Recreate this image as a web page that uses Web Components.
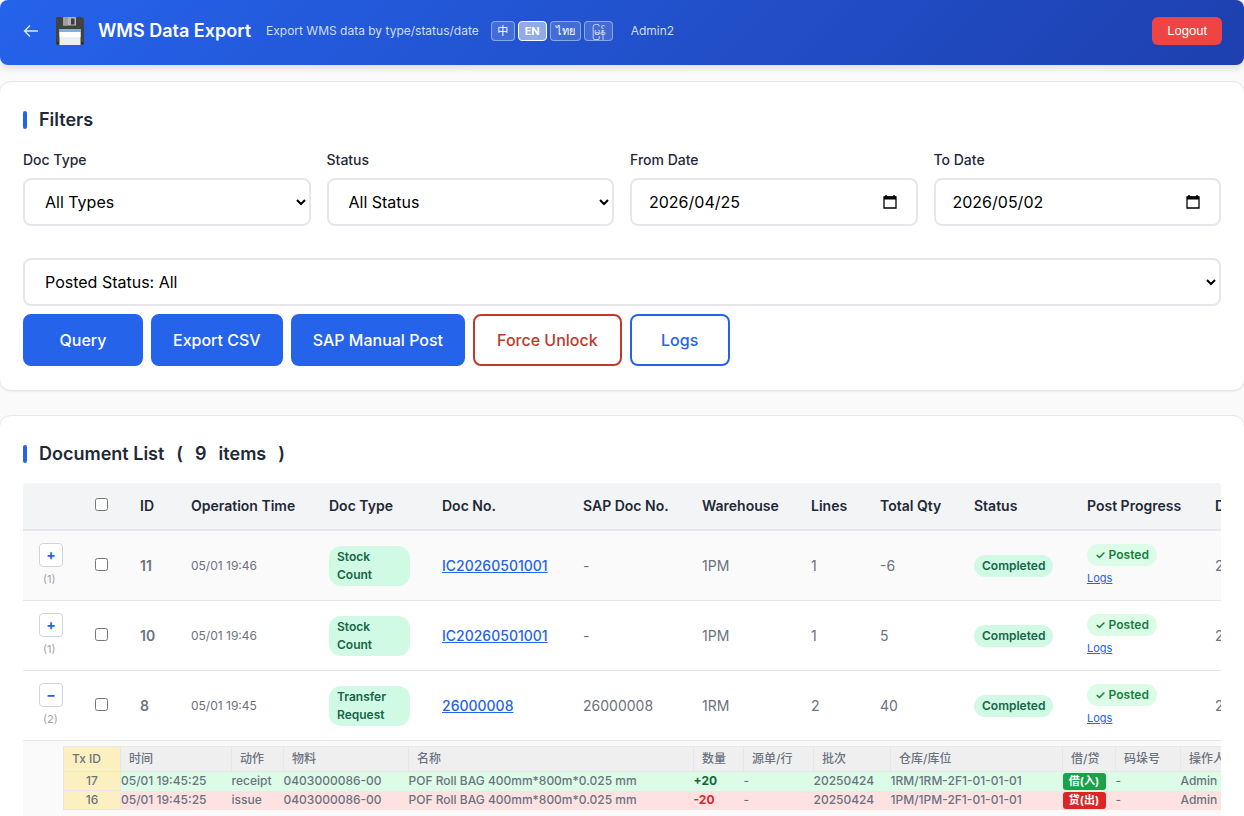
<!DOCTYPE html>
<html lang="en">
<head>
<meta charset="utf-8">
<meta name="viewport" content="width=device-width, initial-scale=1">
<title>WMS Data Export</title>
<style>
  body {
    margin: 0;
    background: #fafafa;
    color: #1f2937;
    font-family: Inter, "Noto Sans CJK SC", "Noto Sans", sans-serif;
    font-size: 14px;
    line-height: 21px;
    overflow-x: hidden;
  }
  .filters { display: grid; grid-template-columns: repeat(4, 1fr); gap: 32px 16px; }
  .wide { grid-column: 1 / -1; }
  .actions { display: flex; flex-wrap: wrap; gap: 8px; margin-top: 8px; }
  main { display: flex; flex-direction: column; gap: 24px; margin: 16px -1px 0; }
</style>
</head>
<body>
<app-header></app-header>
<main>
  <ui-card>
    <span slot="title">Filters</span>
    <div class="filters">
      <select-field label="Doc Type" value="All Types"></select-field>
      <select-field label="Status" value="All Status"></select-field>
      <date-field label="From Date" value="2026/04/25"></date-field>
      <date-field label="To Date" value="2026/05/02"></date-field>
      <select-field class="wide" name="Posted status" value="Posted Status: All"></select-field>
    </div>
    <div class="actions">
      <ui-button style="--min: 120px">Query</ui-button>
      <ui-button>Export CSV</ui-button>
      <ui-button>SAP Manual Post</ui-button>
      <ui-button kind="danger">Force Unlock</ui-button>
      <ui-button kind="outline">Logs</ui-button>
    </div>
  </ui-card>
  <ui-card>
    <span slot="title">Document List</span>
    <span slot="title">(</span>
    <span slot="title">9</span>
    <span slot="title">items</span>
    <span slot="title">)</span>
    <doc-table></doc-table>
  </ui-card>
</main>

<script>
class Base extends HTMLElement {
  connectedCallback() {
    if (this.shadowRoot) return;
    this.attachShadow({ mode: 'open' }).innerHTML = '<style>*{box-sizing:border-box}</style>' + this.render();
  }
}

customElements.define('lang-switch', class extends Base {
  render() {
    return `<style>
      :host { display: flex; gap: 3px; }
      button {
        height: 20px; padding: 0 5px; border: 1px solid #ffffff66; border-radius: 4px;
        background: #ffffff26; color: #fff; font: 400 11px/16px Inter, "Noto Sans CJK SC", "Noto Sans", sans-serif;
        min-width: 24px; overflow: hidden;
      }
      button + button { min-width: 29px; }
      button[aria-pressed=true] { background: #ffffff80; border-color: #fff; font-weight: 700; }
    </style>
    <button aria-pressed="false">中</button><button aria-pressed="true">EN</button><button aria-pressed="false">ไทย</button><button aria-pressed="false">မြန်</button>`;
  }
});

customElements.define('app-header', class extends Base {
  render() {
    return `<style>
      :host {
        display: flex; align-items: center; height: 65px; padding: 0 22px 3px; box-sizing: border-box;
        background: linear-gradient(135deg, #2563eb, #1e40af); border-radius: 8px; color: #fff;
        box-shadow: 0 4px 6px #0000001a;
      }
      .back { display: flex; margin-right: 16px; color: #ffffffd9; }
      .disk { margin-right: 14px; }
      h1 { margin: 0 15px 0 0; font-size: 18px; line-height: 28px; font-weight: 600; white-space: nowrap; }
      .sub, .user { color: #ffffffcc; font-size: 12px; line-height: 20px; white-space: nowrap; }
      lang-switch { margin: 0 18px 0 12px; }
      .out {
        margin-left: auto; height: 28px; padding: 0 15px; border: 0; border-radius: 6px;
        background: #ef4444; color: #fff; font: 13px/20px "Liberation Sans", Arial, sans-serif;
      }
    </style>
    <a class="back" href="#" aria-label="Back"><svg width="18" height="18" viewBox="0 0 18 18" fill="none" stroke="currentColor" stroke-width="1.4"><path d="M16 9H2.500M8 3.500 2.500 9 8 14.500"/></svg></a>
    <svg class="disk" width="28" height="28" viewBox="0 0 28 28" aria-hidden="true">
      <path d="M1 0H26L28 2V28H1L0 27V1Z" fill="#424242"/>
      <path d="M7 0H20V8.500H7Z" fill="#b5b5b5"/><path d="M7 0H12V8.500H7Z" fill="#9e9e9e"/>
      <rect x="15" y="1.500" width="3.500" height="6" fill="#3c3c3c"/>
      <path d="M3.500 12H24.500V28H3.500Z" fill="#eceff1"/><path d="M3.500 12H24.500V15H3.500Z" fill="#82aee3"/>
      <path d="M3.500 15H24.500V20H3.500Z" fill="#fff"/>
      <path d="M1 25H2.500V27H1ZM25.500 25H27V27H25.500Z" fill="#222"/>
    </svg>
    <h1>WMS Data Export</h1>
    <span class="sub">Export WMS data by type/status/date</span>
    <lang-switch></lang-switch>
    <span class="user">Admin2</span>
    <button class="out">Logout</button>`;
  }
});

customElements.define('ui-card', class extends Base {
  render() {
    return `<style>
      :host { display: block; background: #fff; border: 1px solid #e5e7eb; border-radius: 12px; padding: 24px 23px; box-shadow: 0 1px 2px #0000000d; }
      h2 { display: flex; align-items: center; gap: 12px; margin: 0 0 16px; font-size: 18px; line-height: 27px; font-weight: 600; }
      h2::before { content: ""; width: 4px; height: 18px; border-radius: 2px; background: #2563eb; }
    </style>
    <h2><slot name="title"></slot></h2>
    <slot></slot>`;
  }
});

const fieldStyle = `
  :host { display: block; min-width: 0; }
  label { display: block; margin-bottom: 8px; font-size: 14px; line-height: 21px; font-weight: 500; }
  select, input {
    display: block; width: 100%; height: 48px; margin: 0; border: 2px solid #e5e7eb; border-radius: 8px;
    background: #fff; color: #000; font: 16px/24px Inter, sans-serif;
  }`;

customElements.define('select-field', class extends Base {
  render() {
    const label = this.getAttribute('label');
    return `<style>${fieldStyle} select { padding: 0 0 0 16px; }</style>
      ${label ? `<label for="f">${label}</label>` : ''}
      <select id="f" ${label ? '' : `aria-label="${this.getAttribute('name')}"`}><option>${this.getAttribute('value')}</option></select>`;
  }
});

customElements.define('date-field', class extends Base {
  render() {
    return `<style>${fieldStyle}
      .box { display: grid; align-items: center; }
      .box > * { grid-area: 1 / 1; }
      input { padding: 0 48px 0 17px; }
      button { justify-self: end; display: flex; margin-right: 20px; padding: 0; border: 0; background: none; }
    </style>
    <label for="f">${this.getAttribute('label')}</label>
    <div class="box"><input id="f" type="text" value="${this.getAttribute('value')}">
      <button aria-label="Open calendar"><svg width="16" height="16" viewBox="0 0 16 16"><path d="M4 1V3M12 1V3" stroke="#000" stroke-width="1.500"/><path d="M2 3H14V14H2Z" fill="none" stroke="#000" stroke-width="1.300"/><path d="M2 2.500H14V5.500H2Z"/></svg></button>
    </div>`;
  }
});

customElements.define('ui-button', class extends Base {
  render() {
    return `<style>
      :host { display: block; --c: #2563eb; }
      :host([kind=danger]) { --c: #c0392b; }
      button {
        height: 52px; min-width: var(--min, 100px); padding: 0 20px; border: 2px solid var(--c); border-radius: 8px;
        background: var(--c); color: #fff; font: 500 16px/24px Inter, sans-serif; white-space: nowrap;
      }
      :host([kind]) button { background: #fff; color: var(--c); padding: 0 22px; }
    </style><button><slot></slot></button>`;
  }
});

customElements.define('status-badge', class extends Base {
  render() {
    return `<style>
      :host {
        display: inline-block; padding: 2px 8px; border-radius: 12px; background: #d1fae5; color: #166548;
        font-size: 12px; line-height: 18px; font-weight: 600; vertical-align: middle;
      }
      :host([kind=type]) { display: block; }
      :host([kind=posted]) { background: #dcfce7; color: #15803d; }
    </style><slot></slot>`;
  }
});

customElements.define('tx-table', class extends Base {
  render() {
    const cols = [57, 111, 52, 125, 285, 50, 70, 77, 172, 53, 65, 120];
    const heads = ['Tx ID', '时间', '动作', '物料', '名称', '数量', '源单/行', '批次', '仓库/库位', '借/贷', '码垛号', '操作人'];
    const rows = [
      ['in', '17', '05/01 19:45:25', 'receipt', '0403000086-00', 'POF Roll BAG 400mm*800m*0.025 mm', '+20', '-', '20250424', '1RM/1RM-2F1-01-01-01', '借(入)', '-', 'Admin'],
      ['out', '16', '05/01 19:45:25', 'issue', '0403000086-00', 'POF Roll BAG 400mm*800m*0.025 mm', '-20', '-', '20250424', '1PM/1PM-2F1-01-01-01', '贷(出)', '-', 'Admin']
    ];
    return `<style>
      :host { display: block; }
      table { table-layout: fixed; width: 1237px; border-collapse: collapse; color: #6b7280; font-size: 12px; line-height: 18px; font-weight: 500; }
      th { padding: 3px 8px; border: 1px solid #e5e7eb; background: #efefef; font-weight: 500; text-align: left; white-space: nowrap; }
      td { height: 19px; padding: 0; white-space: nowrap; }
      th:first-child, td:first-child { background: #fdf0c0; border: 1px solid #e5e7eb; }
      td:first-child { text-align: center; }
      .in { background: #dcfce7; } .out { background: #fee2e2; }
      .qty { font-weight: 700; }
      .in .qty { color: #166534; } .out .qty { color: #dc2626; }
      .tag { display: block; width: 43px; height: 17px; border-radius: 3px; color: #fff; font-size: 11px; line-height: 17px; font-weight: 700; text-align: center; }
      .in .tag { background: #16a34a; } .out .tag { background: #dc2626; }
    </style>
    <table><colgroup>${cols.map(w => `<col style="width:${w}px">`).join('')}</colgroup>
      <thead><tr>${heads.map(h => `<th>${h}</th>`).join('')}</tr></thead>
      <tbody>${rows.map(([k, ...c]) => `<tr class="${k}">${c.map((v, i) =>
        i === 5 ? `<td class="qty">${v}</td>` : i === 9 ? `<td><span class="tag">${v}</span></td>` : `<td>${v}</td>`).join('')}</tr>`).join('')}</tbody>
    </table>`;
  }
});

customElements.define('doc-table', class extends Base {
  render() {
    const cols = [56, 45, 51, 138, 113, 141, 119, 109, 69, 94, 113, 128, 160];
    const heads = ['ID', 'Operation Time', 'Doc Type', 'Doc No.', 'SAP Doc No.', 'Warehouse', 'Lines', 'Total Qty', 'Status', 'Post Progress', 'Date'];
    const rows = [
      ['+', 1, '11', '05/01 19:46', 'Stock Count', 'IC20260501001', '-', '1PM', '1', '-6'],
      ['+', 1, '10', '05/01 19:46', 'Stock Count', 'IC20260501001', '-', '1PM', '1', '5'],
      ['−', 2, '8', '05/01 19:45', 'Transfer Request', '26000008', '26000008', '1RM', '2', '40']
    ];
    return `<style>
      :host { display: block; overflow-x: auto; scrollbar-width: none; border-radius: 4px 4px 0 0; }
      table { table-layout: fixed; width: 1336px; border-collapse: separate; border-spacing: 0; }
      th { height: 48px; padding: 0 16px 2px; background: #f3f4f6; border-bottom: 2px solid #e5e7eb; text-align: left; font-weight: 600; white-space: nowrap; }
      td { height: 70px; padding: 0 16px; border-bottom: 1px solid #e5e7eb; color: #6b7280; vertical-align: middle; }
      .hover td { background: #fafafa; }
      .id { font-weight: 600; }
      .time { font-size: 12px; }
      a { color: #2563eb; }
      .no a { font-weight: 500; }
      input { display: block; width: 13px; height: 13px; margin: 0 0 2px; }
      .stack { display: flex; flex-direction: column; align-items: flex-start; gap: 3px; font-size: 11px; line-height: 18px; }
      .exp { width: 24px; height: 24px; padding: 0; border: 1px solid #d1d5db; border-radius: 4px; background: #fff; color: #2563eb; font: 700 14px/20px Inter, sans-serif; }
      .n { padding-left: 4px; color: #9ca3af; }
      .detail td { height: 90px; padding: 5px 0 16px 40px; background: #fafafa; vertical-align: top; }
    </style>
    <table><colgroup>${cols.map(w => `<col style="width:${w}px">`).join('')}</colgroup>
      <thead><tr><th></th><th><input type="checkbox" aria-label="Select all"></th>${heads.map(h => `<th>${h}</th>`).join('')}</tr></thead>
      <tbody>${rows.map((r, i) => `<tr class="${i ? '' : 'hover'}">
        <td><div class="stack"><button class="exp">${r[0]}</button><span class="n">(${r[1]})</span></div></td>
        <td><input type="checkbox" aria-label="Select ${r[2]}"></td>
        <td class="id">${r[2]}</td><td class="time">${r[3]}</td>
        <td><status-badge kind="type">${r[4]}</status-badge></td>
        <td class="no"><a href="#">${r[5]}</a></td>
        <td>${r[6]}</td><td>${r[7]}</td><td>${r[8]}</td><td>${r[9]}</td>
        <td><status-badge>Completed</status-badge></td>
        <td><div class="stack"><status-badge kind="posted">✓ Posted</status-badge><a href="#">Logs</a></div></td>
        <td>2026</td></tr>`).join('')}
        <tr class="detail"><td colspan="13"><tx-table></tx-table></td></tr>
      </tbody></table>`;
  }
});
</script>
</body>
</html>
